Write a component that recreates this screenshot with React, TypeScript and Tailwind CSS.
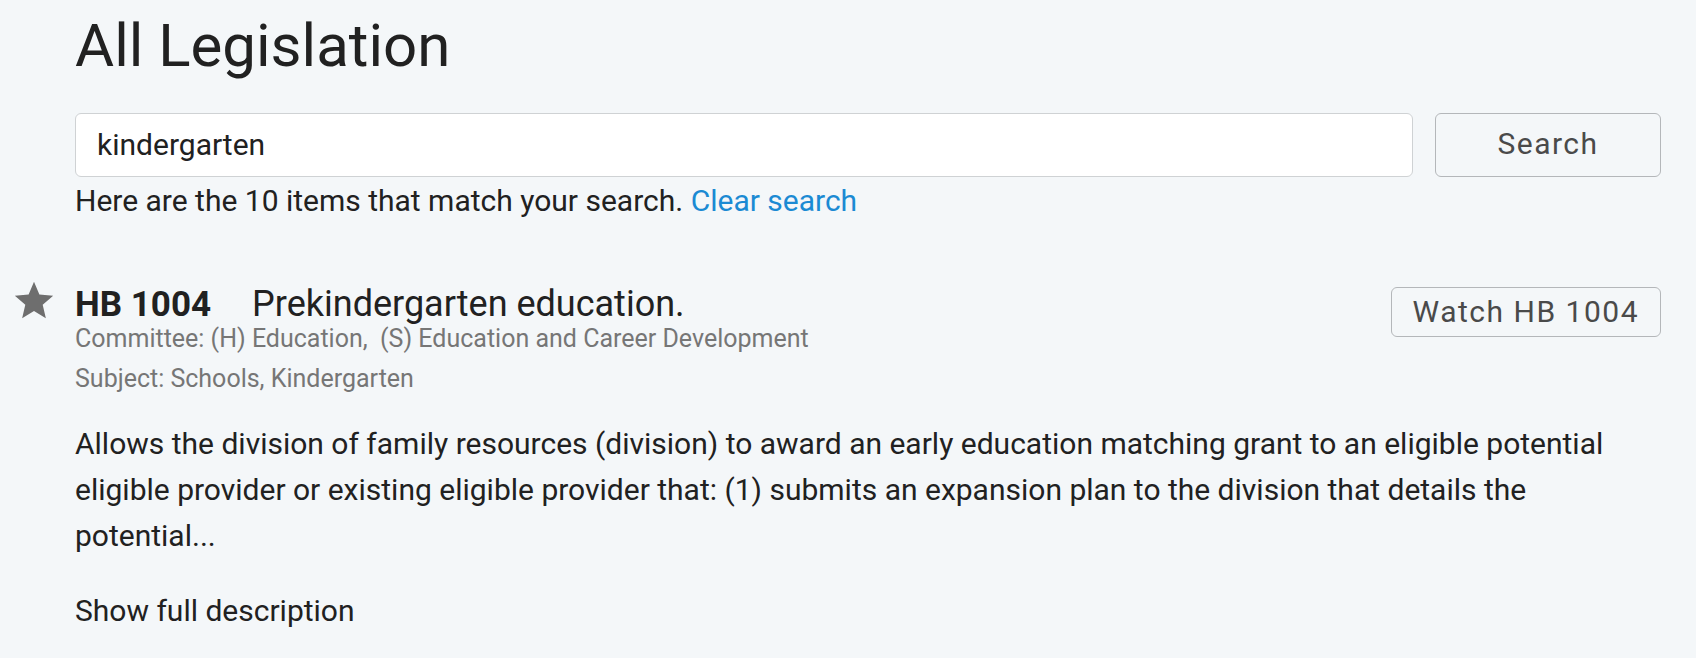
import React from "react";

function Star() {
  return (
    <svg width="46" height="46" viewBox="0 0 24 24" aria-hidden="true">
      <path
        d="M12 17.27L18.18 21l-1.64-7.03L22 9.24l-7.19-.61L12 2 9.19 8.63 2 9.24l5.46 4.73L5.82 21z"
        fill="#6e6e6e"
      />
    </svg>
  );
}

export default function App() {
  return (
    <div className="h-[658px] overflow-hidden w-full bg-[#f4f7f9] font-['Roboto',sans-serif] text-[#212121]">
      <div className="pl-[75px] w-[1661px]">
        <h1 className="pt-[10px] text-[60px] leading-[72px] font-normal">All Legislation</h1>
        <div className="mt-[31px] flex gap-[22px] h-[64px]">
          <input
            readOnly
            defaultValue="kindergarten"
            className="flex-1 min-w-0 bg-white border border-[#cfd2d4] rounded-[6px] px-[21px] pb-[2px] text-[30px] text-[#212121] outline-none"
          />
          <button className="w-[226px] shrink-0 border border-[#b4b7ba] rounded-[6px] bg-[#f4f7f9] pb-[4px] text-[30px] tracking-[1.5px] text-[#4a4a4a]">
            Search
          </button>
        </div>
        <p className="pt-[1px] text-[30px] leading-[46px]">
          Here are the 10 items that match your search.{" "}
          <a className="text-[#1b8ad3]">Clear search</a>
        </p>
      </div>

      <div className="mt-[58px] flex">
        <div className="w-[75px] shrink-0 pl-[11px] -mt-[4px]">
          <Star />
        </div>
        <div className="w-[1586px]">
          <div className="flex justify-between items-start">
            <div className="pt-[2px] flex items-baseline">
              <span className="text-[35px] leading-[40px] font-bold">HB 1004</span>
              <span className="ml-[41px] text-[36px] leading-[40px]">Prekindergarten education.</span>
            </div>
            <button className="mt-[5px] h-[50px] px-[21px] pb-[2px] border border-[#b4b7ba] rounded-[6px] bg-[#f4f7f9] text-[30px] tracking-[1.5px] text-[#4a4a4a]">
              Watch HB 1004
            </button>
          </div>
          <div className="-mt-[18px] text-[25px] leading-[40px] text-[#767676]">
            <div>Committee: (H) Education,&nbsp; (S) Education and Career Development</div>
            <div>Subject: Schools, Kindergarten</div>
          </div>
          <p className="mt-[22px] w-[1560px] text-[30px] leading-[46px]">
            Allows the division of family resources (division) to award an early education matching grant to an eligible potential eligible provider or existing eligible provider that: (1) submits an expansion plan to the division that details the potential...
          </p>
          <p className="mt-[29px] text-[30px] leading-[46px]">Show full description</p>
        </div>
      </div>
    </div>
  );
}
